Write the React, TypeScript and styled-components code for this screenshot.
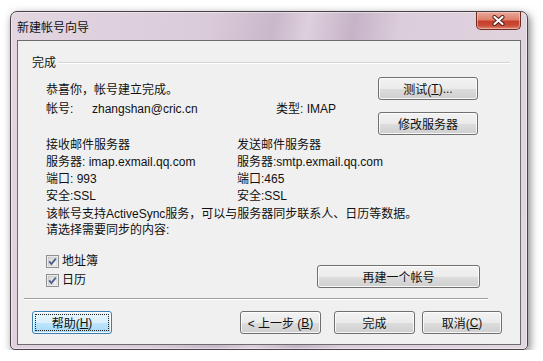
import styled, { createGlobalStyle } from "styled-components";

const GlobalStyle = createGlobalStyle`
  html, body {
    margin: 0;
    padding: 0;
    background: #ffffff;
  }
  body {
    font-family: "Liberation Sans", "Noto Sans CJK SC", sans-serif;
    font-size: 12px;
    color: #111;
  }
`;

const Window = styled.div`
  box-sizing: border-box;
  width: 518px;
  margin: 11px 0 0 10px;
  border: 1px solid #4a4048;
  border-radius: 7px 7px 5px 5px;
  padding: 0 6px 4px 6px;
  display: flex;
  flex-direction: column;
  background: linear-gradient(
    100deg,
    #e2d6e1 0%,
    #dacbd9 35%,
    #c9b7ca 46%,
    #ddd0dc 52%,
    #c6b3c7 60%,
    #dbcdda 68%,
    #e2d7e1 100%
  );
  box-shadow: 2px 3px 9px rgba(0, 0, 0, 0.5), inset 0 0 0 1px rgba(255, 255, 255, 0.45);
`;

const TitleBar = styled.div`
  height: 28px;
  display: flex;
  align-items: flex-start;
`;

const Title = styled.div`
  margin-top: 6px;
  font-size: 12px;
  color: #111;
  font-family: "Noto Sans CJK SC", sans-serif;
`;

const CloseButton = styled.div`
  margin-left: auto;
  width: 45px;
  height: 18px;
  box-sizing: border-box;
  border: 1px solid #6d2b22;
  border-top: none;
  border-radius: 0 0 5px 5px;
  background: linear-gradient(
    #eaa999 0%,
    #de806c 45%,
    #c63f2a 55%,
    #c94d37 80%,
    #de8a74 100%
  );
  box-shadow: inset 0 0 0 1px rgba(255, 210, 200, 0.55);
  display: flex;
  align-items: center;
  justify-content: center;
`;

const Client = styled.div`
  border: 1px solid #6c6c6c;
  background: #f0f0f0;
  padding: 14px 10px 10px 14px;
  display: flex;
  flex-direction: column;
`;

const GroupHeader = styled.div`
  height: 16px;
  line-height: 16px;
  display: flex;
  align-items: center;
  gap: 2px;
`;

const GroupLine = styled.div`
  flex: 1;
  border-top: 1px solid #d5d5d5;
  border-bottom: 1px solid #ffffff;
`;

const Section = styled.div`
  padding-left: 14px;
  display: flex;
  flex-direction: column;
`;

const TopRow = styled.div`
  margin-top: 6px;
  display: flex;
`;

const InfoCol = styled.div`
  flex: 1;
  padding-top: 5px;
  display: flex;
  flex-direction: column;
  gap: 3px;
`;

const Line = styled.div`
  line-height: 16px;
  height: 16px;
  white-space: nowrap;
`;

const AccountRow = styled.div`
  display: grid;
  grid-template-columns: 46px 184px auto;
  line-height: 16px;
`;

const ButtonCol = styled.div`
  display: flex;
  flex-direction: column;
  gap: 12px;
  margin-right: 32px;
`;

const Button = styled.div<{ $w: number; $focus?: boolean }>`
  position: relative;
  box-sizing: border-box;
  width: ${(p) => p.$w}px;
  height: 23px;
  border: 1px solid ${(p) => (p.$focus ? "#3c7fb1" : "#707070")};
  border-radius: 3px;
  background: ${(p) =>
    p.$focus
      ? "linear-gradient(#eaf6fd 0%, #d9f0fc 50%, #bee6fd 51%, #a7d9f5 100%)"
      : "linear-gradient(#f2f2f2 0%, #ebebeb 50%, #dddddd 51%, #cfcfcf 100%)"};
  box-shadow: inset 0 0 0 1px rgba(255, 255, 255, 0.8);
  display: flex;
  align-items: center;
  justify-content: center;
  font-size: 12px;
  color: #111;
  white-space: nowrap;
  &::after {
    content: "";
    display: ${(p) => (p.$focus ? "block" : "none")};
    position: absolute;
    inset: 2px;
    border: 1px dotted #222;
  }
`;

const ServerGrid = styled.div`
  margin-top: 2px;
  display: grid;
  grid-template-columns: 191px 1fr;
  line-height: 17px;
`;

const SyncText = styled.div`
  margin-top: 1px;
  line-height: 16px;
`;

const BottomRow = styled.div`
  margin-top: 15px;
  display: flex;
  align-items: flex-end;
`;

const CheckList = styled.div`
  display: flex;
  flex-direction: column;
  gap: 3px;
`;

const CheckItem = styled.label`
  height: 16px;
  display: flex;
  align-items: center;
  gap: 3px;
  line-height: 16px;
`;

const Separator = styled.div`
  margin: 10px 22px 0 -8px;
  border-top: 1px solid #a0a0a0;
  border-bottom: 1px solid #ffffff;
`;

const Footer = styled.div`
  margin-top: 11px;
  display: flex;
  align-items: center;
`;

const Spacer = styled.div`
  flex: 1;
`;

function CheckBox() {
  return (
    <svg width="13" height="13" viewBox="0 0 13 13">
      <defs>
        <linearGradient id="cbg" x1="0" y1="0" x2="1" y2="1">
          <stop offset="0" stopColor="#cfcfcf" />
          <stop offset="1" stopColor="#fbfbfb" />
        </linearGradient>
      </defs>
      <rect x="0.5" y="0.5" width="12" height="12" fill="#fff" stroke="#8e8f8f" />
      <rect x="2" y="2" width="9" height="9" fill="url(#cbg)" stroke="#b8b8b8" strokeWidth="0.6" />
      <path d="M3.2 6.4 L5.4 9 L9.8 3.6" fill="none" stroke="#4a5f8f" strokeWidth="1.8" />
    </svg>
  );
}

function CloseGlyph() {
  return (
    <svg width="13" height="11" viewBox="0 0 13 11">
      <path d="M2.5 2 L10.5 9 M10.5 2 L2.5 9" stroke="#4a1a14" strokeWidth="4" strokeLinecap="round" />
      <path d="M2.5 2 L10.5 9 M10.5 2 L2.5 9" stroke="#ffffff" strokeWidth="2.2" strokeLinecap="round" />
    </svg>
  );
}

export default function App() {
  return (
    <>
      <GlobalStyle />
      <Window>
        <TitleBar>
          <Title>新建帐号向导</Title>
          <CloseButton>
            <CloseGlyph />
          </CloseButton>
        </TitleBar>
        <Client>
          <GroupHeader>
            <span>完成</span>
            <GroupLine />
          </GroupHeader>
          <Section>
            <TopRow>
              <InfoCol>
                <Line>恭喜你，帐号建立完成。</Line>
                <AccountRow>
                  <span>帐号:</span>
                  <span>zhangshan@cric.cn</span>
                  <span>类型: IMAP</span>
                </AccountRow>
              </InfoCol>
              <ButtonCol>
                <Button $w={100}>
                  测试(<u>T</u>)...
                </Button>
                <Button $w={100}>修改服务器</Button>
              </ButtonCol>
            </TopRow>
            <ServerGrid>
              <span>接收邮件服务器</span>
              <span>发送邮件服务器</span>
              <span>服务器: imap.exmail.qq.com</span>
              <span>服务器:smtp.exmail.qq.com</span>
              <span>端口: 993</span>
              <span>端口:465</span>
              <span>安全:SSL</span>
              <span>安全:SSL</span>
            </ServerGrid>
            <SyncText>
              <Line>该帐号支持ActiveSync服务，可以与服务器同步联系人、日历等数据。</Line>
              <Line>请选择需要同步的内容:</Line>
            </SyncText>
            <BottomRow>
              <CheckList>
                <CheckItem>
                  <CheckBox />
                  地址簿
                </CheckItem>
                <CheckItem>
                  <CheckBox />
                  日历
                </CheckItem>
              </CheckList>
              <Spacer />
              <Button $w={163} style={{ marginRight: 30 }}>
                再建一个帐号
              </Button>
            </BottomRow>
          </Section>
          <Separator />
          <Footer>
            <Button $w={80} $focus>
              帮助(<u>H</u>)
            </Button>
            <Spacer />
            <Button $w={81} style={{ marginRight: 13 }}>
              &lt; 上一步 (<u>B</u>)
            </Button>
            <Button $w={81} style={{ marginRight: 7 }}>
              完成
            </Button>
            <Button $w={80} style={{ marginRight: 8 }}>
              取消(<u>C</u>)
            </Button>
          </Footer>
        </Client>
      </Window>
    </>
  );
}
